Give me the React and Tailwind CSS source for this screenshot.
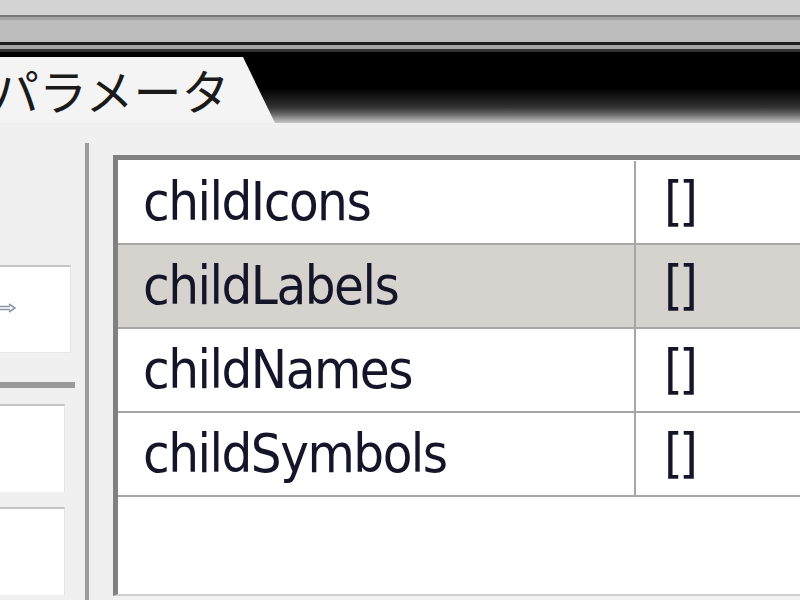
export default function App() {
  const rows = [
    { name: "childIcons", value: "[]", bg: "bg-white" },
    { name: "childLabels", value: "[]", bg: "bg-[#d6d3ce]" },
    { name: "childNames", value: "[]", bg: "bg-white" },
    { name: "childSymbols", value: "[]", bg: "bg-white" },
  ];
  return (
    <div className="w-[800px] h-[600px] overflow-hidden bg-[#f0f0f0] flex flex-col">
      {/* top chrome */}
      <div className="h-[15px] bg-[#d3d3d3]" />
      <div className="h-[2px] bg-[#7a7a7a]" />
      <div className="h-[3px] bg-[#a2a2a2]" />
      <div className="h-[22px] bg-[#bcbcbc]" />
      <div className="h-[3px] bg-[#1e1e1e]" />
      <div className="h-[4px] bg-[#a5a5a5]" />
      <div className="h-[3px] bg-[#333333]" />
      {/* tab bar */}
      <div className="relative h-[71px] bg-[linear-gradient(to_bottom,#000_0%,#000_52%,#333_78%,#6a6a6a_88%,#9a9a9a_94%,#c8c8c8_100%)]">
        <div className="absolute left-0 top-[5px] bottom-0 w-[280px] bg-[#f4f4f4] [clip-path:polygon(0_0,243px_0,275px_100%,0_100%)] flex items-start overflow-hidden">
          <span
            className="ml-[-9px] mt-[5px] text-[48px] leading-[54px] text-[#1a1a1a] tracking-[0px] whitespace-nowrap"
            style={{ fontFamily: '"Noto Sans CJK JP", sans-serif' }}
          >
            パラメータ
          </span>
        </div>
      </div>
      {/* content */}
      <div className="flex-1 flex flex-row">
        {/* left column */}
        <div className="w-[85px] flex flex-col">
          <div className="h-[142px]" />
          <div className="w-[71px] h-[88px] bg-white border-t-2 border-[#c4c4c4] border-r border-b border-r-[#e2e2e2] border-b-[#e6e6e6] flex items-center">
            <svg width="16" height="12" viewBox="0 0 16 12" className="ml-0 mt-[-4px]">
              <path d="M0 4.5 H10 M0 7.5 H10 M9 2 L15 6 L9 10" fill="none" stroke="#8a96a8" strokeWidth="1.6" />
            </svg>
          </div>
          <div className="h-[29px]" />
          <div className="w-[75px] h-[6px] bg-[#9a9a9a]" />
          <div className="h-[16px]" />
          <div className="w-[65px] h-[88px] bg-white border-t-2 border-[#c4c4c4] border-r border-r-[#e4e4e4]" />
          <div className="h-[15px]" />
          <div className="w-[65px] h-[88px] bg-white border-t-2 border-[#c4c4c4] border-r border-r-[#e4e4e4]" />
        </div>
        {/* divider */}
        <div className="w-[4px] mt-[20px] bg-[#9c9c9c]" />
        {/* table */}
        <div className="flex-1 pl-[24px] pt-[32px] pb-[4px]">
          <div className="h-full border-l-[5px] border-t-[5px] border-[#808080] border-b-2 border-b-[#d0d0d0] bg-white flex flex-col pt-[1px]">
            {rows.map((r) => (
              <div key={r.name} className={`flex flex-row h-[84px] border-b-2 border-[#a6a6a6] ${r.bg}`}>
                <div
                  className="w-[518px] border-r-2 border-[#a6a6a6] flex items-center pl-[25px] pb-[2px] text-[54px] text-[#15152a] tracking-[-1.5px]"
                  style={{ fontFamily: '"DejaVu Sans Condensed", "DejaVu Sans", sans-serif' }}
                >
                  {r.name}
                </div>
                <div
                  className="flex-1 flex items-center pl-[28px] pb-[2px] text-[54px] text-[#15152a] tracking-[-4px]"
                  style={{ fontFamily: '"DejaVu Sans Condensed", "DejaVu Sans", sans-serif' }}
                >
                  {r.value}
                </div>
              </div>
            ))}
          </div>
        </div>
      </div>
    </div>
  );
}
